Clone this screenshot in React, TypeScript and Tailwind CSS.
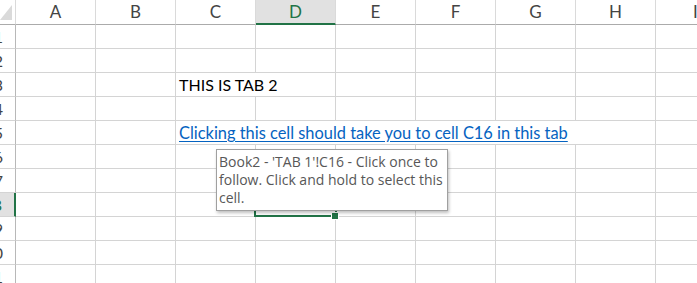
const cols = ["A", "B", "C", "D", "E", "F", "G", "H", "I"];
const rows = [1, 2, 3, 4, 5, 6, 7, 8, 9, 10, 11];

const GRID = "border-r border-b border-[#d4d4d4]";

const RowCells = ({ row }: { row: number }) => {
  const selectedRow = row === 8;
  const cells: React.ReactNode[] = [];

  cells.push(
    <div
      key="h"
      className={
        "flex items-center justify-end overflow-hidden pr-[12px] text-[16px] border-b border-[#d4d4d4] " +
        (selectedRow
          ? "bg-[#e1e1e1] text-[#217346] border-r-2 border-r-[#217346]"
          : "text-[#444444] border-r border-r-[#b8b8b8]")
      }
    >
      {row}
    </div>
  );

  let i = 0;
  while (i < cols.length) {
    if (row === 3 && i === 2) {
      cells.push(
        <div key={i} className={`col-span-2 flex items-end pl-[3px] pb-[1px] text-[16px] leading-[20px] text-black whitespace-nowrap ${GRID}`}>
          THIS IS TAB 2
        </div>
      );
      i += 2;
      continue;
    }
    if (row === 5 && i === 2) {
      cells.push(
        <div key={i} className={`col-span-6 flex items-end pl-[3px] pb-[1px] text-[16.4px] leading-[20px] whitespace-nowrap ${GRID}`}>
          <a href="#" className="text-[#0563c1] underline underline-offset-2">
            Clicking this cell should take you to cell C16 in this tab
          </a>
        </div>
      );
      i += 6;
      continue;
    }
    cells.push(<div key={i} className={GRID} />);
    i++;
  }
  return <>{cells}</>;
};

export default function App() {
  return (
    <div className="relative w-[697px] h-[283px] overflow-hidden bg-white font-['Lato',sans-serif]">
      <div className="grid w-max grid-cols-[16px_repeat(9,80px)] grid-rows-[25px_repeat(11,24px)]">
        <div className="border-r border-b border-r-[#dadada] border-b-[#ababab]">
          <svg width="15" height="24" viewBox="0 0 15 24">
            <polygon points="0,20 12,5 12,20" fill="#dadada" />
          </svg>
        </div>
        {cols.map((c) =>
          c === "D" ? (
            <div
              key={c}
              className="flex items-center justify-center bg-[#e1e1e1] border-r border-r-[#dadada] border-b-2 border-b-[#217346] text-[17px] text-[#217346]"
            >
              {c}
            </div>
          ) : (
            <div
              key={c}
              className="flex items-center justify-center border-r border-b border-r-[#dadada] border-b-[#ababab] text-[17px] text-[#444444]"
            >
              {c}
            </div>
          )
        )}
        {rows.map((r) => (
          <RowCells key={r} row={r} />
        ))}
      </div>

      {/* active cell D8 */}
      <div className="absolute left-[254px] top-[191px] w-[83px] h-[26px] border-2 border-[#217346]" />
      <div className="absolute left-[331px] top-[212px] w-[8px] h-[8px] bg-[#217346] border border-white" />

      {/* hyperlink tooltip */}
      <div className="absolute left-[216px] top-[149px] w-[232px] h-[62px] border border-[#a0a0a0] bg-white pl-[2px] pt-[3px] text-[14px] leading-[18px] text-[#575757] whitespace-nowrap font-['Open_Sans',sans-serif] shadow-[1px_2px_3px_rgba(0,0,0,0.25)]">
        Book2 - 'TAB 1'!C16 - Click once to
        <br />
        follow. Click and hold to select this
        <br />
        cell.
      </div>
    </div>
  );
}
